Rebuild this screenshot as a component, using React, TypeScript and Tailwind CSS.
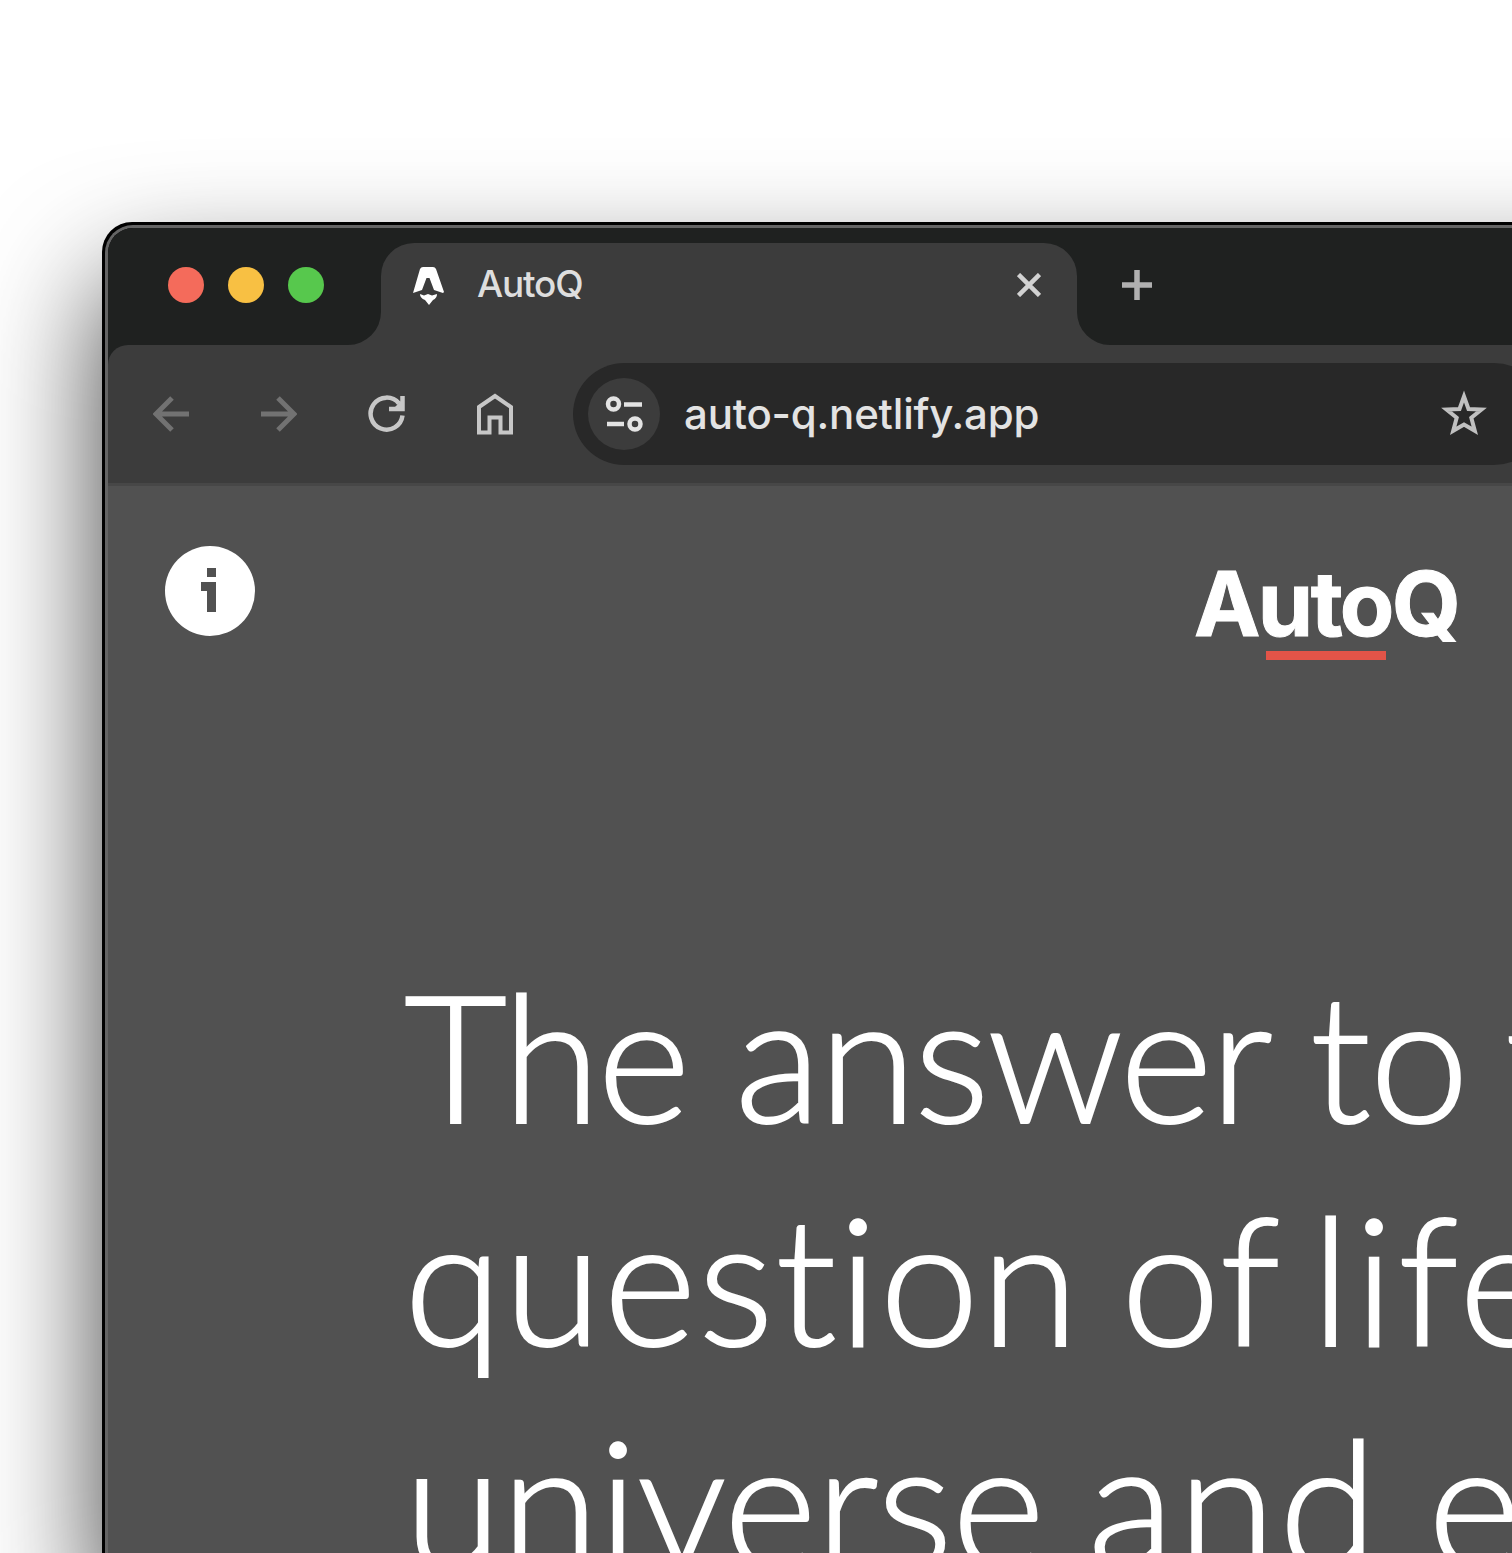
import React from "react";

function Word({ text, className }: { text: string; className: string }) {
  return <span className={`block shrink-0 whitespace-nowrap ${className}`}>{text}</span>;
}

function TabStrip() {
  return (
    <div className="flex h-[117px] items-start bg-[#1f2120] pl-[60px]">
      <div className="mt-[39px] flex gap-6">
        <span className="h-9 w-9 rounded-full bg-[#f46b5b]" />
        <span className="h-9 w-9 rounded-full bg-[#f8c043]" />
        <span className="h-9 w-9 rounded-full bg-[#57c84d]" />
      </div>
      <div className="relative ml-[57px] mt-[15px] flex h-[102px] w-[696px] items-start rounded-t-[33px] bg-[#3c3c3c]">
        <svg className="absolute -left-[33px] bottom-0" width="33" height="33" viewBox="0 0 33 33">
          <path d="M33 0v33H0A33 33 0 0 0 33 0z" fill="#3c3c3c" />
        </svg>
        <svg className="absolute -right-[33px] bottom-0" width="33" height="33" viewBox="0 0 33 33">
          <path d="M0 0v33h33A33 33 0 0 1 0 0z" fill="#3c3c3c" />
        </svg>
        <svg className="ml-[31px] mt-[23px] h-[40px] w-[33px] shrink-0" viewBox="0 0 33 40">
          <path d="M8 3q1-2 3-2h10q2 0 3 2l8 23-1 1-9-3-4.500-12h-3L10 24l-9 3z" fill="#fff" />
          <path d="M8 28l4 1.500 4-1.500 4 1.500 5-1.500q0 4-4 6l-4 5-4-5q-5-2-5-6z" fill="#fff" />
        </svg>
        <span className="ml-[32px] mt-[18px] font-['Inter'] text-[37px] font-medium leading-[45px] tracking-[-1.200px] text-[#dedede]">
          AutoQ
        </span>
        <svg className="absolute left-[636px] top-[30px]" width="24" height="24" viewBox="0 0 24 24">
          <path d="M1.500 1.500l21 21M22.500 1.500l-21 21" stroke="#d2d2d2" strokeWidth="4.500" />
        </svg>
      </div>
      <svg className="ml-[45px] mt-[42px]" width="30" height="30" viewBox="0 0 30 30">
        <path d="M15 0v30M0 15h30" stroke="#b0b0b0" strokeWidth="5.500" />
      </svg>
    </div>
  );
}

function Toolbar() {
  return (
    <div className="bg-[#1f2120]">
      <div className="flex h-[141px] items-start rounded-tl-[20px] border-b-3 border-[#474747] bg-[#3c3c3c] pl-[45px]">
        <svg className="mt-[51px] shrink-0" width="36" height="36" viewBox="0 0 36 36" fill="none" stroke="#727272" strokeWidth="5">
          <path d="M36 18H4M19 2L3 18l16 16" />
        </svg>
        <svg className="ml-[72px] mt-[51px] shrink-0" width="36" height="36" viewBox="0 0 36 36" fill="none" stroke="#727272" strokeWidth="5">
          <path d="M0 18h32M17 2l16 16-16 16" />
        </svg>
        <svg className="ml-[71px] mt-[50px] shrink-0" width="38" height="38" viewBox="0 0 38 38" fill="none" stroke="#c7c7c7" strokeWidth="4.500">
          <path d="M34.500 20.500A16 16 0 1 1 31 8.500" />
          <path d="M34.500 1v13H21" />
          <path d="M35 4v10H25z" fill="#c7c7c7" stroke="none" />
        </svg>
        <svg className="ml-[70px] mt-[48px] shrink-0" width="38" height="43" viewBox="0 0 38 43" fill="none" stroke="#c7c7c7" strokeWidth="4">
          <path d="M3 14L19 3l16 11v25.500H24.500V24.500H13.500v15H3z" />
        </svg>
        <div className="ml-[59px] mt-[18px] flex h-[102px] w-[972px] shrink-0 items-center rounded-full bg-[#282828] pl-[15px]">
          <div className="flex h-[72px] w-[72px] shrink-0 items-center justify-center rounded-full bg-[#3c3c3c]">
            <svg width="38" height="38" viewBox="0 0 38 38" fill="none" stroke="#e3e3e3" strokeWidth="4.500">
              <circle cx="8.500" cy="9" r="5.500" />
              <path d="M19 9.500h18" />
              <path d="M2 29h17" />
              <circle cx="30" cy="29" r="5.500" />
            </svg>
          </div>
          <span className="ml-6 w-[370px] whitespace-nowrap font-['Inter'] text-[42px] font-medium leading-[54px] tracking-[-0.200px] text-[#e3e3e3]">
            auto-q.netlify.app
          </span>
          <svg className="ml-[386px] shrink-0" width="48" height="48" viewBox="0 0 48 48">
            <path
              d="M24 6.500l4.500 12.500 13 .5-10.200 8.300 3.500 13L24 34.500l-10.800 6.300 3.500-13L6.500 19.500l13-.5z"
              fill="none"
              stroke="#c0c0c0"
              strokeWidth="4"
            />
          </svg>
        </div>
      </div>
    </div>
  );
}

function Page() {
  return (
    <main className="h-[1080px] overflow-hidden bg-[#515151]">
      <header className="flex h-[240px] items-start pl-[57px]">
        <div className="mt-[60px] h-[90px] w-[90px] shrink-0 rounded-full bg-white">
          <svg width="90" height="90" viewBox="0 0 90 90" fill="#515151">
            <path d="M42 22h9v9h-9zM36 36h15v30h-9V45h-6z" />
          </svg>
        </div>
        <div className="ml-[939px] mt-[63px] flex shrink-0 flex-col">
          <span className="whitespace-nowrap font-['Inter'] text-[89px] font-bold leading-[110px] tracking-[-2.600px] text-white [-webkit-text-stroke:1px_white]">
            AutoQ
          </span>
          <span className="-mt-[8px] ml-[72px] h-[9px] w-[120px] bg-[#e35448]" />
        </div>
      </header>
      <h1 className="ml-[296px] mt-[217px] font-['Lato'] text-[178px] font-light leading-[223px] text-white [-webkit-text-stroke:2px_white] [font-variant-ligatures:none]">
        <span className="flex">
          <Word text="The" className="w-[331px] tracking-[-3px]" />
          <Word text="answer" className="w-[575px] tracking-[-2.500px]" />
          <Word text="to" className="w-[195px] tracking-[-1px]" />
          <Word text="the" className="" />
        </span>
        <span className="flex">
          <Word text="question" className="w-[717px] tracking-[1.800px]" />
          <Word text="of" className="w-[190px] tracking-[1px]" />
          <Word text="life," className="tracking-[4px]" />
        </span>
        <span className="flex">
          <Word text="universe" className="w-[684px] tracking-[-0.700px]" />
          <Word text="and" className="w-[340px] tracking-[3.500px]" />
          <Word text="everything" className="" />
        </span>
      </h1>
    </main>
  );
}

export default function App() {
  return (
    <div className="h-[1553px] w-full overflow-hidden bg-white pl-[102px] pt-[222px]">
      <div className="w-[2200px] rounded-tl-[30px] bg-black pl-[3px] pt-[3px] shadow-[0_60px_120px_rgba(0,0,0,0.75)]">
        <div className="overflow-hidden rounded-tl-[28px] border-l-3 border-t-3 border-[#646464]">
          <TabStrip />
          <Toolbar />
          <Page />
        </div>
      </div>
    </div>
  );
}
